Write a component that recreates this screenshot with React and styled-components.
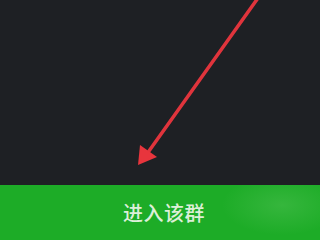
import React from "react";
import styled, { createGlobalStyle } from "styled-components";

const Global = createGlobalStyle`
  html, body { margin: 0; padding: 0; background: #1f2125; }
`;

const Screen = styled.div`
  width: 320px;
  height: 240px;
  display: flex;
  flex-direction: column;
  overflow: hidden;
  font-family: "Noto Sans CJK SC", "Noto Sans", sans-serif;
`;

const Backdrop = styled.div`
  flex: 1;
  background: #1e2024;
  position: relative;
`;

const Arrow = styled.svg`
  position: absolute;
  inset: 0;
  width: 100%;
  height: 100%;
`;

const JoinButton = styled.div`
  height: 55px;
  display: flex;
  align-items: center;
  justify-content: center;
  padding-left: 8px;
  background:
    radial-gradient(ellipse 60px 30px at 282px 20px, rgba(110, 205, 110, 0.3), transparent),
    #1dac27;
  color: #dcefd8;
  font-size: 20px;
  font-weight: 500;
  letter-spacing: 0.5px;
`;

export default function App() {
  return (
    <>
      <Global />
      <Screen>
        <Backdrop>
          <Arrow viewBox="0 0 320 185">
            <line x1="258" y1="-2" x2="149" y2="151" stroke="#e0343c" strokeWidth="3.5" strokeLinecap="round" />
            <polygon points="138,165 140,145 157,157" fill="#e8353d" />
          </Arrow>
        </Backdrop>
        <JoinButton>进入该群</JoinButton>
      </Screen>
    </>
  );
}
